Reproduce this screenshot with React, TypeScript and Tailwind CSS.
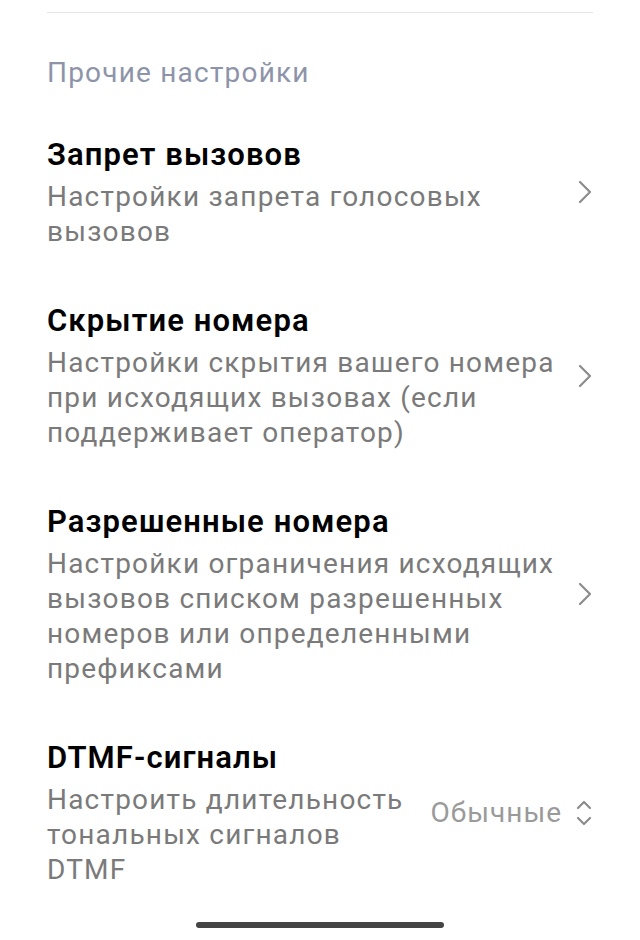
import React from "react";

type Item = {
  title: string;
  subtitle: string;
  value?: string;
};

const ITEMS: Item[] = [
  { title: "Запрет вызовов", subtitle: "Настройки запрета голосовых вызовов" },
  {
    title: "Скрытие номера",
    subtitle: "Настройки скрытия вашего номера при исходящих вызовах (если поддерживает оператор)",
  },
  {
    title: "Разрешенные номера",
    subtitle: "Настройки ограничения исходящих вызовов списком разрешенных номеров или определенными префиксами",
  },
  {
    title: "DTMF-сигналы",
    subtitle: "Настроить длительность тональных сигналов DTMF",
    value: "Обычные",
  },
];

const Chevron = () => (
  <svg width="14" height="24" viewBox="0 0 14 24" fill="none">
    <path d="M2 2 L12 12 L2 22" stroke="#8c8c8c" strokeWidth="2.2" strokeLinecap="round" strokeLinejoin="round" />
  </svg>
);

const UpDown = () => (
  <svg width="16" height="28" viewBox="0 0 16 28" fill="none">
    <path d="M2 9 L8 3 L14 9" stroke="#8c8c8c" strokeWidth="2.2" strokeLinecap="round" strokeLinejoin="round" />
    <path d="M2 19 L8 25 L14 19" stroke="#8c8c8c" strokeWidth="2.2" strokeLinecap="round" strokeLinejoin="round" />
  </svg>
);

function Row({ item }: { item: Item }) {
  return (
    <div className="flex items-center">
      <div className={item.value ? "w-[372px]" : "w-[516px]"}>
        <div className="text-[31px] leading-[40px] font-semibold text-black tracking-[1.1px]">{item.title}</div>
        <div className="mt-[4px] text-[28px] leading-[35px] text-[#7a7a7a] tracking-[1.2px]">{item.subtitle}</div>
      </div>
      <div className="flex-1 flex items-center justify-end gap-[14px] pr-[1px]">
        {item.value && <span className="text-[28px] text-[#9a9a9a] tracking-[1px]">{item.value}</span>}
        {item.value ? <UpDown /> : <Chevron />}
      </div>
    </div>
  );
}

export default function App() {
  return (
    <div
      className="w-[640px] h-[940px] bg-white relative overflow-hidden"
      style={{ fontFamily: "Roboto, 'Noto Sans', sans-serif" }}
    >
      <div className="px-[47px]">
        <div className="pt-[12px]">
          <div className="h-px bg-[#e6e6e6]" />
        </div>
        <div className="mt-[44px] text-[28px] leading-[32px] text-[#8d94aa] tracking-[1.2px]">Прочие настройки</div>
        <div className="mt-[46px] flex flex-col gap-[52px]">
          {ITEMS.map((it) => (
            <Row key={it.title} item={it} />
          ))}
        </div>
      </div>
      <div className="absolute bottom-[12px] left-[196px] w-[248px] h-[6px] rounded-full bg-[#444]" />
    </div>
  );
}
